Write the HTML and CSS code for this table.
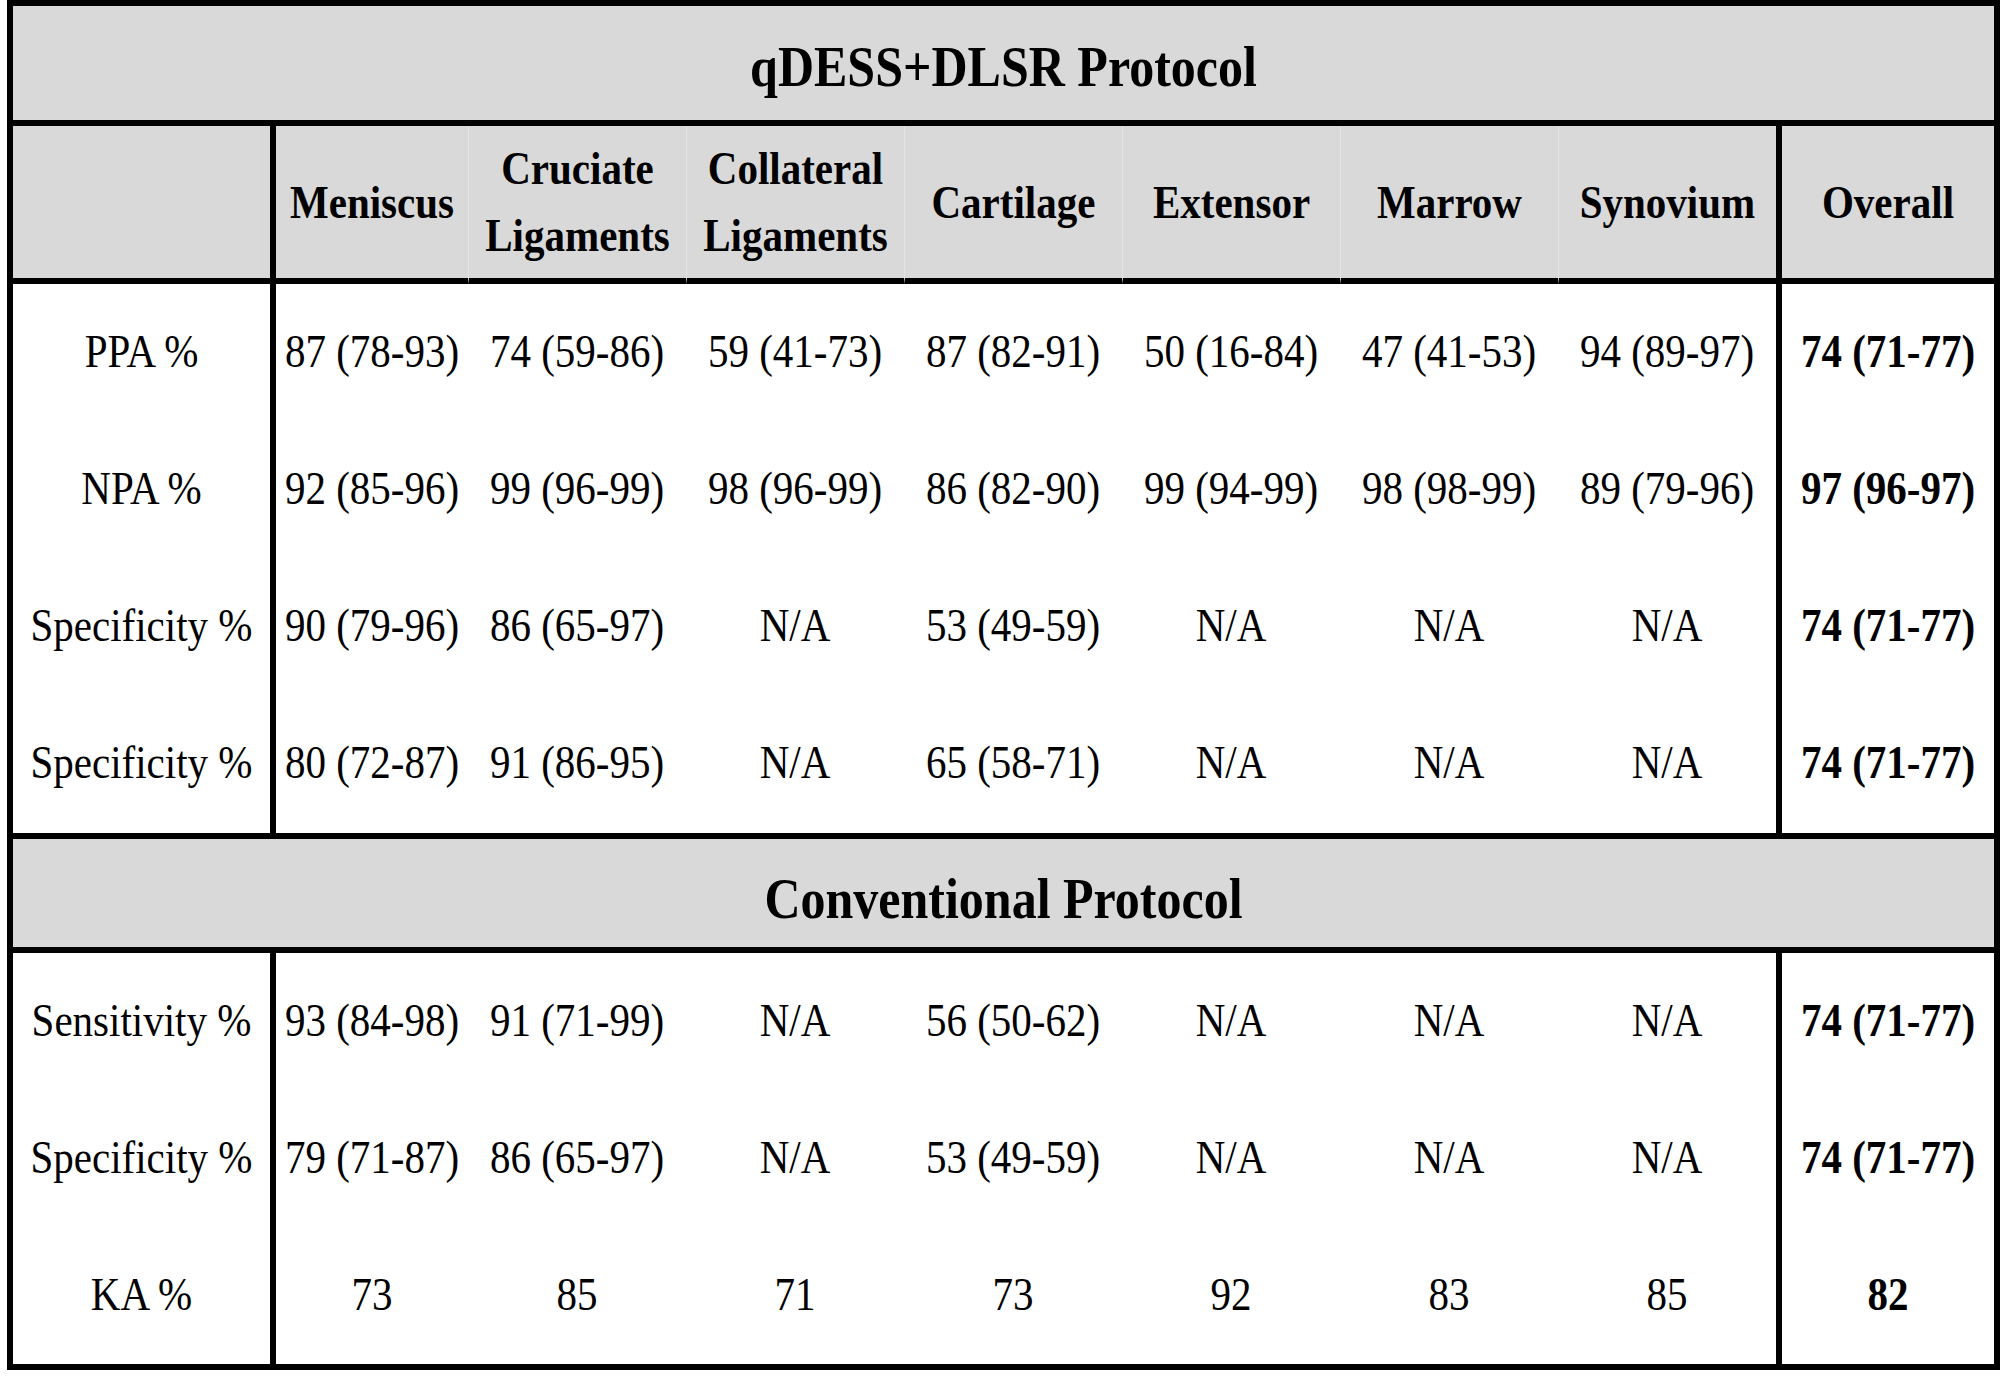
FILE: index.html
```html
<!DOCTYPE html>
<html>
<head>
<meta charset="utf-8">
<link rel="stylesheet" href="styles.css">
</head>
<body>
<table class="tbl">
  <colgroup>
    <col class="c-label">
    <col class="c-men">
    <col class="c-data"><col class="c-data"><col class="c-data"><col class="c-data"><col class="c-data"><col class="c-data">
    <col class="c-all">
  </colgroup>
  <tr class="r-title">
    <td colspan="9" class="title"><span class="t">qDESS+DLSR Protocol</span></td>
  </tr>
  <tr class="r-head">
    <td class="lab head"></td>
    <td class="head"><span class="t">Meniscus</span></td>
    <td class="head sep"><span class="t">Cruciate<br>Ligaments</span></td>
    <td class="head sep"><span class="t">Collateral<br>Ligaments</span></td>
    <td class="head sep"><span class="t">Cartilage</span></td>
    <td class="head sep"><span class="t">Extensor</span></td>
    <td class="head sep"><span class="t">Marrow</span></td>
    <td class="head sep"><span class="t">Synovium</span></td>
    <td class="all head"><span class="t">Overall</span></td>
  </tr>
  <tr class="r-data">
    <td class="lab"><span class="t">PPA %</span></td>
    <td><span class="t">87 (78-93)</span></td>
    <td><span class="t">74 (59-86)</span></td>
    <td><span class="t">59 (41-73)</span></td>
    <td><span class="t">87 (82-91)</span></td>
    <td><span class="t">50 (16-84)</span></td>
    <td><span class="t">47 (41-53)</span></td>
    <td><span class="t">94 (89-97)</span></td>
    <td class="all"><span class="t">74 (71-77)</span></td>
  </tr>
  <tr class="r-data">
    <td class="lab"><span class="t">NPA %</span></td>
    <td><span class="t">92 (85-96)</span></td>
    <td><span class="t">99 (96-99)</span></td>
    <td><span class="t">98 (96-99)</span></td>
    <td><span class="t">86 (82-90)</span></td>
    <td><span class="t">99 (94-99)</span></td>
    <td><span class="t">98 (98-99)</span></td>
    <td><span class="t">89 (79-96)</span></td>
    <td class="all"><span class="t">97 (96-97)</span></td>
  </tr>
  <tr class="r-data">
    <td class="lab"><span class="t">Specificity %</span></td>
    <td><span class="t">90 (79-96)</span></td>
    <td><span class="t">86 (65-97)</span></td>
    <td><span class="t">N/A</span></td>
    <td><span class="t">53 (49-59)</span></td>
    <td><span class="t">N/A</span></td>
    <td><span class="t">N/A</span></td>
    <td><span class="t">N/A</span></td>
    <td class="all"><span class="t">74 (71-77)</span></td>
  </tr>
  <tr class="r-data r-last">
    <td class="lab"><span class="t">Specificity %</span></td>
    <td><span class="t">80 (72-87)</span></td>
    <td><span class="t">91 (86-95)</span></td>
    <td><span class="t">N/A</span></td>
    <td><span class="t">65 (58-71)</span></td>
    <td><span class="t">N/A</span></td>
    <td><span class="t">N/A</span></td>
    <td><span class="t">N/A</span></td>
    <td class="all"><span class="t">74 (71-77)</span></td>
  </tr>
  <tr class="r-title2">
    <td colspan="9" class="title"><span class="t">Conventional Protocol</span></td>
  </tr>
  <tr class="r-data">
    <td class="lab"><span class="t">Sensitivity %</span></td>
    <td><span class="t">93 (84-98)</span></td>
    <td><span class="t">91 (71-99)</span></td>
    <td><span class="t">N/A</span></td>
    <td><span class="t">56 (50-62)</span></td>
    <td><span class="t">N/A</span></td>
    <td><span class="t">N/A</span></td>
    <td><span class="t">N/A</span></td>
    <td class="all"><span class="t">74 (71-77)</span></td>
  </tr>
  <tr class="r-data">
    <td class="lab"><span class="t">Specificity %</span></td>
    <td><span class="t">79 (71-87)</span></td>
    <td><span class="t">86 (65-97)</span></td>
    <td><span class="t">N/A</span></td>
    <td><span class="t">53 (49-59)</span></td>
    <td><span class="t">N/A</span></td>
    <td><span class="t">N/A</span></td>
    <td><span class="t">N/A</span></td>
    <td class="all"><span class="t">74 (71-77)</span></td>
  </tr>
  <tr class="r-data">
    <td class="lab"><span class="t">KA %</span></td>
    <td><span class="t">73</span></td>
    <td><span class="t">85</span></td>
    <td><span class="t">71</span></td>
    <td><span class="t">73</span></td>
    <td><span class="t">92</span></td>
    <td><span class="t">83</span></td>
    <td><span class="t">85</span></td>
    <td class="all"><span class="t">82</span></td>
  </tr>
</table>
</body>
</html>
```

FILE: styles.css
```css
html, body {
  margin: 0;
  padding: 0;
  background: #fff;
}

body {
  font-family: "Liberation Serif", "Times New Roman", serif;
  color: #000;
}

.tbl {
  margin-left: 7px;
  width: 1993px;
  table-layout: fixed;
  border: 6px solid #000;
  border-collapse: separate;
  border-spacing: 0;
}

.c-label { width: 263px; }
.c-men { width: 192px; }
.c-data { width: 218px; }
.c-all { width: 218px; }

.tbl td {
  box-sizing: border-box;
  padding: 0;
  text-align: center;
  vertical-align: middle;
  font-size: 41px;
  line-height: 60px;
  white-space: nowrap;
  overflow: visible;
}

.t {
  display: inline-block;
  transform: translateY(-2px) scaleY(1.12);
  line-height: 60px;
}

.r-title { height: 120px; }
.r-head { height: 158px; }
.r-data { height: 137px; }
.r-last { height: 144px; }
.r-title2 { height: 114px; }

.tbl td.title {
  background: #d9d9d9;
  border-bottom: 6px solid #000;
  font-weight: bold;
  font-size: 50px;
}

.title .t {
  transform: translateY(4px) scaleY(1.14);
}

.r-title2 .t {
  transform: translateY(6px) scaleY(1.14);
}

.tbl td.head {
  background: #d9d9d9;
  border-bottom: 6px solid #000;
  font-weight: bold;
}

.head .t {
  transform: scaleY(1.12);
}

.head.sep {
  border-left: 1px solid #e4e4e4;
}

.r-last td {
  border-bottom: 6px solid #000;
}

.lab {
  border-right: 6px solid #000;
}

.all {
  border-left: 6px solid #000;
  font-weight: bold;
}
```
